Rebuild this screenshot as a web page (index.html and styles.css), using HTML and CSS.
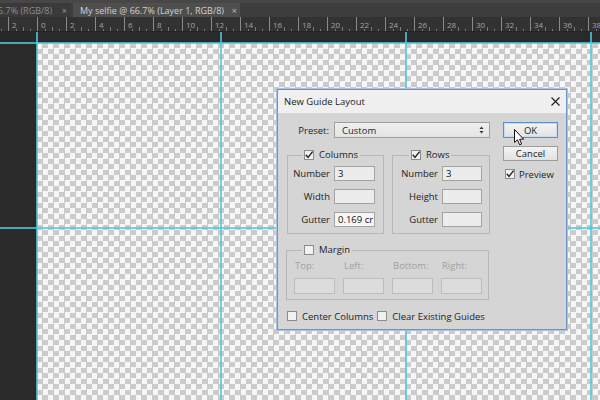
FILE: index.html
```html
<!DOCTYPE html>
<html>
<head>
<meta charset="utf-8">
<link rel="stylesheet" href="styles.css">
</head>
<body>
<div class="app">
  <div class="tabbar">
    <div class="tab"><span class="tab-title cut">6.7% (RGB/8)</span><span class="tab-x">×</span></div>
    <div class="tab active"><span class="tab-title">My selfie @ 66.7% (Layer 1, RGB/8)</span><span class="tab-x">×</span></div>
  </div>
  <div class="ruler">
    <div class="ruler-track">
      <div class="rcell"></div>
      <div class="rcell"><span>2</span></div>
      <div class="rcell"><span>0</span></div>
      <div class="rcell"><span>2</span></div>
      <div class="rcell"><span>4</span></div>
      <div class="rcell"><span>6</span></div>
      <div class="rcell"><span>8</span></div>
      <div class="rcell"><span>10</span></div>
      <div class="rcell"><span>12</span></div>
      <div class="rcell"><span>14</span></div>
      <div class="rcell"><span>16</span></div>
      <div class="rcell"><span>18</span></div>
      <div class="rcell"><span>20</span></div>
      <div class="rcell"><span>22</span></div>
      <div class="rcell"><span>24</span></div>
      <div class="rcell"><span>26</span></div>
      <div class="rcell"><span>28</span></div>
      <div class="rcell"><span>30</span></div>
      <div class="rcell"><span>32</span></div>
      <div class="rcell"><span>34</span></div>
      <div class="rcell"><span>36</span></div>
      <div class="rcell last"><span>38</span></div>
    </div>
  </div>
  <div class="work">
    <div class="corner"></div>
    <div class="paste-top"></div>
    <div class="paste-left"></div>
    <div class="canvas"></div>
    <div class="guide v g1"></div>
    <div class="guide v g2"></div>
    <div class="guide v g3"></div>
    <div class="guide v g4"></div>
    <div class="guide h h1"></div>
    <div class="guide h h2"></div>
  </div>

  <div class="dialog">
    <div class="titlebar">
      <span class="title">New Guide Layout</span>
      <svg class="close" width="9" height="9" viewBox="0 0 9 9"><path d="M0.5 0.5 L8.5 8.5 M8.5 0.5 L0.5 8.5" stroke="#222" stroke-width="1.2"/></svg>
    </div>
    <div class="dbody">
      <div class="main">
        <div class="preset-row">
          <span class="lbl preset-lbl">Preset:</span>
          <div class="select">
            <span>Custom</span>
            <svg class="arrows" width="5" height="8" viewBox="0 0 5 8"><path d="M0.5 3 L2.5 0.5 L4.5 3 Z M0.5 5 L2.5 7.5 L4.5 5 Z" fill="#333"/></svg>
          </div>
        </div>
        <div class="groups">
          <fieldset class="grp cols">
            <legend class="leg"><span class="cb checked"><svg width="10" height="10" viewBox="0 0 10 10"><path d="M1.8 4.8 L4 7.4 L8.6 1.6" fill="none" stroke="#222" stroke-width="1.4"/></svg></span><span>Columns</span></legend>
            <div class="fields">
              <div class="frow"><span class="lbl">Number</span><span class="inp">3</span></div>
              <div class="frow"><span class="lbl">Width</span><span class="inp"></span></div>
              <div class="frow"><span class="lbl">Gutter</span><span class="inp white">0.169 cr</span></div>
            </div>
          </fieldset>
          <fieldset class="grp rows">
            <legend class="leg"><span class="cb checked"><svg width="10" height="10" viewBox="0 0 10 10"><path d="M1.8 4.8 L4 7.4 L8.6 1.6" fill="none" stroke="#222" stroke-width="1.4"/></svg></span><span>Rows</span></legend>
            <div class="fields">
              <div class="frow"><span class="lbl">Number</span><span class="inp">3</span></div>
              <div class="frow"><span class="lbl">Height</span><span class="inp"></span></div>
              <div class="frow"><span class="lbl">Gutter</span><span class="inp"></span></div>
            </div>
          </fieldset>
        </div>
        <fieldset class="grp margin">
          <legend class="leg"><span class="cb"></span><span>Margin</span></legend>
          <div class="mgrid">
            <span class="dlbl">Top:</span>
            <span class="dlbl">Left:</span>
            <span class="dlbl">Bottom:</span>
            <span class="dlbl">Right:</span>
            <span class="inp dis"></span>
            <span class="inp dis"></span>
            <span class="inp dis"></span>
            <span class="inp dis"></span>
          </div>
        </fieldset>
        <div class="opts">
          <span class="cb"></span><span class="opt-text">Center Columns</span>
          <span class="cb"></span><span class="opt-text">Clear Existing Guides</span>
        </div>
      </div>
      <div class="side">
        <div class="btn default">OK</div>
        <div class="btn cancel">Cancel</div>
        <div class="preview"><span class="cb checked"><svg width="10" height="10" viewBox="0 0 10 10"><path d="M1.8 4.8 L4 7.4 L8.6 1.6" fill="none" stroke="#222" stroke-width="1.4"/></svg></span><span>Preview</span></div>
      </div>
    </div>
  </div>

  <svg class="cursor" width="11" height="17" viewBox="0 0 11 17"><path d="M0.5 0.5 L0.5 13.5 L3.5 10.8 L5.6 15.8 L7.6 15 L5.6 10.2 L9.6 10.2 Z" fill="#fff" stroke="#111" stroke-width="1"/></svg>
</div>
</body>
</html>
```
FILE: styles.css
```css
* { box-sizing: border-box; }
html, body { margin: 0; padding: 0; }
body {
  width: 600px;
  height: 400px;
  overflow: hidden;
  background: #2a2a2a;
  font-family: "Open Sans", "Noto Sans", sans-serif;
}
.app {
  position: relative;
  width: 600px;
  height: 400px;
  display: flex;
  flex-direction: column;
  overflow: hidden;
}

/* tabs */
.tabbar {
  height: 17px;
  flex: none;
  background: #3d3d3d;
  display: flex;
  align-items: flex-end;
  gap: 3px;
  border-top: 3px solid #474747;
}
.tab {
  height: 14px;
  display: flex;
  align-items: center;
  background: #3a3a3a;
  color: #8e8e8e;
  font-size: 9px;
  white-space: nowrap;
}
.tab:first-child { width: 70px; }
.tab-title.cut { margin-left: -2px; }
.tab-x { margin-left: auto; padding-right: 3px; font-size: 9px; color: #999; }
.tab.active {
  width: 167px;
  background: #4e4e4e;
  color: #d2d2d2;
  padding-left: 7px;
}
.tab.active .tab-x { color: #bbb; }

/* ruler */
.ruler {
  height: 15px;
  flex: none;
  background: #323232;
  overflow: hidden;
  border-bottom: 1px solid #242424;
}
.ruler-track {
  display: flex;
  margin-left: -21px;
  height: 100%;
}
.rcell {
  flex: none;
  width: 29px;
  height: 100%;
  border-left: 1px solid #8a8a8a;
  background-image:
    linear-gradient(#7a7a7a, #7a7a7a),
    linear-gradient(#7a7a7a, #7a7a7a),
    linear-gradient(#7a7a7a, #7a7a7a);
  background-size: 1px 2px, 1px 4px, 1px 2px;
  background-position: 7px 100%, 14px 100%, 21px 100%;
  background-repeat: no-repeat;
  color: #a3a3a3;
  font-size: 8px;
  line-height: 8px;
  padding: 4px 0 0 3px;
}
.rcell.last { width: 14px; overflow: hidden; }

/* work area */
.work {
  position: relative;
  flex: 1;
  display: grid;
  grid-template-columns: 37px 1fr;
  grid-template-rows: 11px 1fr;
}
.corner { background: #282828; }
.paste-top { background: #2a2a2a; }
.paste-left { background: #2b2b2b; }
.canvas {
  background-color: #f6f6f6;
  background-image: conic-gradient(#cbcbcb 25%, #f6f6f6 0 50%, #cbcbcb 0 75%, #f6f6f6 0);
  background-size: 11px 11px;
}
.guide {
  position: absolute;
  background: rgba(80, 200, 216, 0.8);
}
.guide.v { top: 0; bottom: 0; width: 2px; }
.guide.h { left: 0; right: 0; height: 2px; }
.g1 { left: 36px; }
.g2 { left: 220px; }
.g3 { left: 405px; }
.g4 { left: 590px; }
.h1 { top: 10px; }
.h2 { top: 195px; }

/* dialog */
.dialog {
  position: absolute;
  left: 277px;
  top: 89px;
  width: 290px;
  height: 241px;
  border: 1px solid #6f93c4;
  box-shadow: 0 0 0 1px #a9c3e2;
  background: #d5d5d5;
  display: flex;
  flex-direction: column;
  font-size: 9.5px;
  color: #1e1e1e;
  z-index: 2;
}
.titlebar {
  height: 23px;
  flex: none;
  background: #f0f0f0;
  display: flex;
  align-items: center;
  padding: 0 6px 0 6px;
}
.title { font-size: 9.5px; color: #222; }
.close { margin-left: auto; }
.dbody {
  flex: 1;
  display: flex;
  padding: 9px 0 0 8px;
}
.main { width: 204px; flex: none; display: flex; flex-direction: column; }
.side { width: 55px; flex: none; margin-left: 13px; display: flex; flex-direction: column; }

.lbl { white-space: nowrap; }
.preset-row { display: flex; align-items: center; height: 16px; }
.preset-lbl { width: 43px; text-align: right; margin-right: 5px; }
.select {
  width: 156px;
  height: 16px;
  border: 1px solid #a0a0a0;
  background: linear-gradient(#efefef, #e4e4e4);
  display: flex;
  align-items: center;
  padding: 0 5px 0 7px;
}
.arrows { margin-left: auto; }

.groups { display: flex; gap: 8px; margin-top: 12px; }
.grp {
  margin: 0;
  padding: 0;
  border: 1px solid #b6b6b6;
  min-width: 0;
}
.leg {
  padding: 0 2px;
  display: flex;
  align-items: center;
  gap: 5px;
  height: 10px;
  line-height: 10px;
}
.cols { width: 97px; margin-left: 1px; }
.rows { width: 98px; }
.cols .leg { margin-left: 14px; }
.rows .leg { margin-left: 16px; }
.fields { padding: 6px 0 6px 0; display: flex; flex-direction: column; gap: 8px; }
.frow { display: flex; align-items: center; height: 15px; }
.frow .lbl { text-align: right; margin-right: 4px; }
.cols .frow .lbl { width: 42px; }
.rows .frow .lbl { width: 45px; }
.inp {
  width: 41px;
  height: 15px;
  border: 1px solid #a3a3a3;
  background: #ececec;
  padding-left: 3px;
  line-height: 13px;
  color: #111;
  white-space: nowrap;
  overflow: hidden;
}
.inp.white { background: #f6f6f6; }
.rows .inp { width: 40px; }

.margin { margin-top: 11px; width: 203px; }
.margin .leg { margin-left: 15px; }
.mgrid {
  display: grid;
  grid-template-columns: repeat(4, 41px);
  column-gap: 8px;
  row-gap: 6px;
  padding: 5px 0 5px 7px;
}
.dlbl { color: #a0a0a0; padding-left: 1px; line-height: 12px; }
.inp.dis { height: 16px; background: #dcdcdc; border-color: #bcbcbc; }

.opts {
  display: flex;
  align-items: center;
  margin-top: 10px;
  margin-left: 1px;
  height: 12px;
}
.opt-text { margin-left: 5px; margin-right: 4px; white-space: nowrap; }

.cb {
  width: 10px;
  height: 10px;
  flex: none;
  border: 1px solid #8c8c8c;
  background: #f1f1f1;
  display: inline-flex;
  align-items: center;
  justify-content: center;
  position: relative;
}
.cb svg { position: absolute; left: -1px; top: -1px; }

.btn {
  height: 16px;
  border: 1px solid #9c9c9c;
  background: linear-gradient(#f4f4f4, #e2e2e2);
  display: flex;
  align-items: center;
  justify-content: center;
  color: #222;
}
.btn.default { border-color: #5b8dcf; box-shadow: inset 0 0 0 1px #c6dcf4; }
.btn.cancel { margin-top: 8px; height: 15px; }
.preview { display: flex; align-items: center; gap: 4px; margin-top: 8px; margin-left: 2px; height: 10px; }

.cursor {
  position: absolute;
  left: 514px;
  top: 129px;
  z-index: 3;
}
```
